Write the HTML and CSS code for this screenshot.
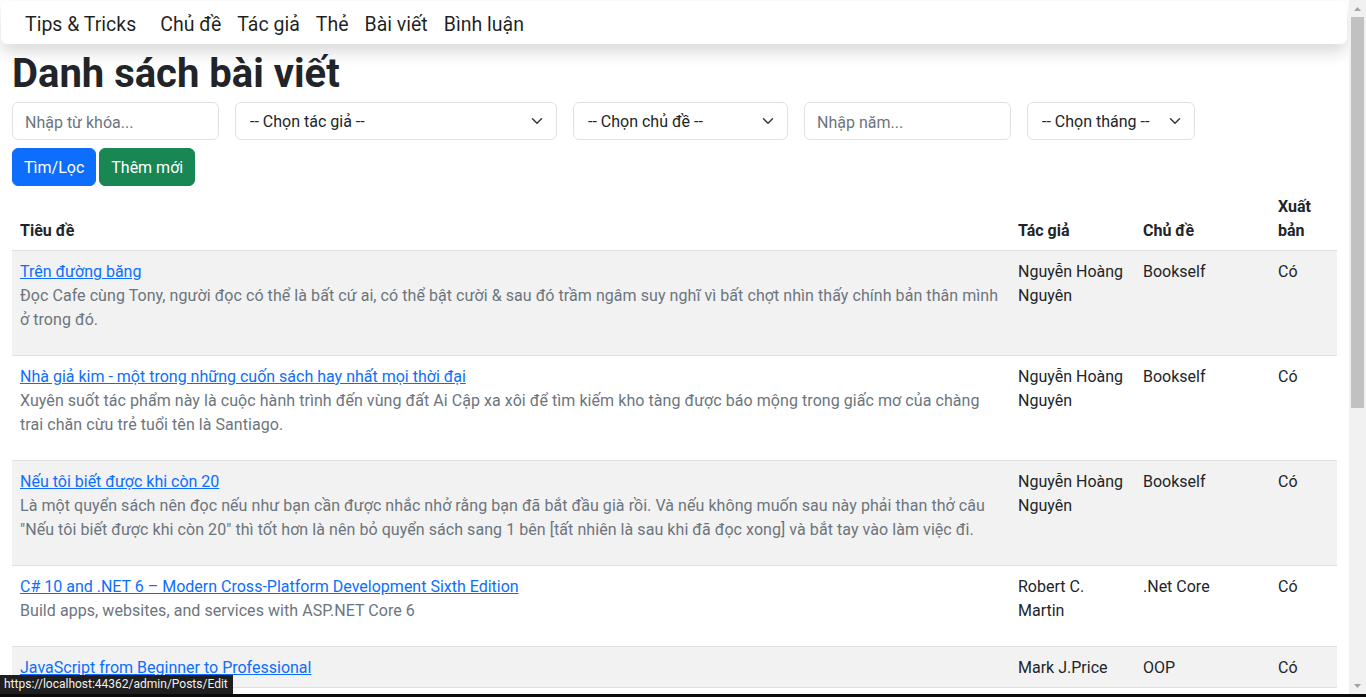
FILE: index.html
```html
<!DOCTYPE html>
<html lang="vi">
<head>
<meta charset="utf-8">
<title>Danh sách bài viết</title>
<link rel="stylesheet" href="styles.css">
</head>
<body>
<div class="window">
  <div class="viewport">
    <div class="page">
      <nav class="navbar">
        <a class="brand" href="#">Tips &amp; Tricks</a>
        <a class="nav-link" href="#">Chủ đề</a>
        <a class="nav-link" href="#">Tác giả</a>
        <a class="nav-link" href="#">Thẻ</a>
        <a class="nav-link" href="#">Bài viết</a>
        <a class="nav-link" href="#">Bình luận</a>
      </nav>
      <main class="content">
        <h1 class="title">Danh sách bài viết</h1>
        <form class="filters">
          <input class="form-control w-keyword" type="text" placeholder="Nhập từ khóa...">
          <span class="select-wrap w-author">
            <select class="form-select"><option>-- Chọn tác giả --</option></select>
            <svg class="chevron" viewBox="0 0 16 16"><path d="m2 5 6 6 6-6"/></svg>
          </span>
          <span class="select-wrap w-topic">
            <select class="form-select"><option>-- Chọn chủ đề --</option></select>
            <svg class="chevron" viewBox="0 0 16 16"><path d="m2 5 6 6 6-6"/></svg>
          </span>
          <input class="form-control w-year" type="text" placeholder="Nhập năm...">
          <span class="select-wrap w-month">
            <select class="form-select"><option>-- Chọn tháng --</option></select>
            <svg class="chevron" viewBox="0 0 16 16"><path d="m2 5 6 6 6-6"/></svg>
          </span>
        </form>
        <div class="actions">
          <button class="btn btn-primary" type="button">Tìm/Lọc</button>
          <button class="btn btn-success" type="button">Thêm mới</button>
        </div>
        <table class="table">
          <colgroup>
            <col class="c-title"><col class="c-author"><col class="c-topic"><col class="c-pub">
          </colgroup>
          <thead>
            <tr><th>Tiêu đề</th><th>Tác giả</th><th>Chủ đề</th><th>Xuất bản</th></tr>
          </thead>
          <tbody>
            <tr class="striped">
              <td><a href="#">Trên đường băng</a><p class="desc">Đọc Cafe cùng Tony, người đọc có thể là bất cứ ai, có thể bật cười &amp; sau đó trầm ngâm suy nghĩ vì bất chợt nhìn thấy chính bản thân mình ở trong đó.</p></td>
              <td>Nguyễn Hoàng Nguyên</td><td>Bookself</td><td>Có</td>
            </tr>
            <tr>
              <td><a href="#">Nhà giả kim - một trong những cuốn sách hay nhất mọi thời đại</a><p class="desc">Xuyên suốt tác phẩm này là cuộc hành trình đến vùng đất Ai Cập xa xôi để tìm kiếm kho tàng được báo mộng trong giấc mơ của chàng trai chăn cừu trẻ tuổi tên là Santiago.</p></td>
              <td>Nguyễn Hoàng Nguyên</td><td>Bookself</td><td>Có</td>
            </tr>
            <tr class="striped">
              <td><a href="#">Nếu tôi biết được khi còn 20</a><p class="desc">Là một quyển sách nên đọc nếu như bạn cần được nhắc nhở rằng bạn đã bắt đầu già rồi. Và nếu không muốn sau này phải than thở câu "Nếu tôi biết được khi còn 20" thì tốt hơn là nên bỏ quyển sách sang 1 bên [tất nhiên là sau khi đã đọc xong] và bắt tay vào làm việc đi.</p></td>
              <td>Nguyễn Hoàng Nguyên</td><td>Bookself</td><td>Có</td>
            </tr>
            <tr>
              <td><a href="#">C# 10 and .NET 6 – Modern Cross-Platform Development Sixth Edition</a><p class="desc">Build apps, websites, and services with ASP.NET Core 6</p></td>
              <td>Robert C. Martin</td><td>.Net Core</td><td>Có</td>
            </tr>
            <tr class="striped">
              <td><a href="#">JavaScript from Beginner to Professional</a></td>
              <td>Mark J.Price</td><td>OOP</td><td>Có</td>
            </tr>
          </tbody>
        </table>
      </main>
    </div>
    <div class="scrollbar">
      <div class="sb-btn"><svg viewBox="0 0 7 4"><path d="M0 4 3.5 0 7 4z"/></svg></div>
      <div class="sb-track"><div class="sb-thumb"></div></div>
      <div class="sb-btn"><svg viewBox="0 0 7 4"><path d="M0 0 7 0 3.5 4z"/></svg></div>
    </div>
    <div class="status">https://localhost:44362/admin/Posts/Edit</div>
  </div>
  <div class="frame-bottom"></div>
</div>
</body>
</html>
```
FILE: styles.css
```css
* { box-sizing: border-box; }

html, body {
  margin: 0;
  padding: 0;
}

body {
  font-family: Roboto, "Liberation Sans", sans-serif;
  font-size: 16px;
  line-height: 1.5;
  color: #212529;
  background: #fff;
}

.window {
  height: 697px;
  display: flex;
  flex-direction: column;
  overflow: hidden;
}

.viewport {
  flex: 1;
  display: flex;
  position: relative;
  overflow: hidden;
}

.page {
  flex: 1;
  min-width: 0;
  overflow: hidden;
}

.frame-bottom {
  height: 3px;
  background: #0b0b0b;
}

/* Navbar */
.navbar {
  height: 43px;
  margin: 1px 2px 0 1px;
  padding: 4px 16px 0 24px;
  display: flex;
  align-items: center;
  background: #fff;
  border-radius: 6px;
  box-shadow: 0 .5rem 1rem rgba(0, 0, 0, .15);
  position: relative;
  z-index: 1;
}

.navbar a {
  color: rgba(0, 0, 0, .88);
  text-decoration: none;
  font-size: 19.5px;
  line-height: 30px;
}

.brand {
  margin-right: 16px;
}

.nav-link {
  padding: 0 8px;
}

/* Content */
.content {
  padding: 0 12px;
}

.title {
  margin: 5px 0 5px;
  padding-top: 1px;
  height: 48px;
  font-size: 40px;
  line-height: 48px;
  font-weight: 700;
  color: #212529;
}

.filters {
  display: flex;
  gap: 16px;
  margin: 0;
}

.form-control,
.form-select {
  display: block;
  width: 100%;
  height: 38px;
  padding: 7px 12px 5px;
  font-family: inherit;
  font-size: 16px;
  line-height: 1.5;
  color: #212529;
  background: #fff;
  border: 1px solid #dee2e6;
  border-radius: 6px;
  outline: none;
}

.form-control::placeholder {
  color: #6c757d;
  opacity: 1;
}

.form-select {
  appearance: none;
  -webkit-appearance: none;
  padding-left: 14px;
  padding-right: 36px;
}

.select-wrap {
  position: relative;
  display: block;
}

.chevron {
  position: absolute;
  right: 12px;
  top: 13px;
  width: 16px;
  height: 12px;
  fill: none;
  stroke: #343a40;
  stroke-width: 2;
  stroke-linecap: round;
  stroke-linejoin: round;
  pointer-events: none;
}

.w-keyword { width: 207px; }
.w-author { width: 322px; }
.w-topic { width: 215px; }
.w-year { width: 207px; }
.w-month { width: 168px; }

.actions {
  display: flex;
  gap: 3px;
  margin-top: 8px;
}

.btn {
  height: 38px;
  padding: 7px 11px 5px;
  font-family: inherit;
  font-size: 16px;
  line-height: 1.5;
  color: #fff;
  border: 1px solid transparent;
  border-radius: 6px;
}

.btn-primary {
  background: #0d6efd;
  border-color: #0d6efd;
}

.btn-success {
  background: #198754;
  border-color: #198754;
}

/* Table */
.table {
  width: 100%;
  table-layout: fixed;
  border-collapse: collapse;
  margin: 0 0 16px;
}

.c-title { width: 998px; }
.c-author { width: 125px; }
.c-topic { width: 135px; }
.c-pub { width: 67px; }

.table th,
.table td {
  padding: 9px 8px 7px;
  text-align: left;
  border-bottom: 1px solid #dee2e6;
}

.table th {
  vertical-align: bottom;
  font-weight: 700;
}

.table td {
  vertical-align: top;
}

.table tr.striped td {
  background: #f2f2f2;
}

.table a {
  color: #0d6efd;
  text-decoration: underline;
}

.desc {
  margin: 0 0 16px;
  color: #6c757d;
  letter-spacing: .06px;
}

/* Fake window scrollbar */
.scrollbar {
  width: 17px;
  flex: none;
  display: flex;
  flex-direction: column;
  background: #f1f1f1;
}

.sb-btn {
  height: 17px;
  display: flex;
  align-items: center;
  justify-content: center;
}

.sb-btn svg {
  width: 7px;
  height: 4px;
  fill: #a3a3a3;
}

.sb-track {
  flex: 1;
}

.sb-thumb {
  height: 391px;
  margin: 0 2px;
  background: #c1c1c1;
}

/* Link status bubble */
.status {
  position: absolute;
  left: 0;
  bottom: 0;
  height: 19px;
  padding: 0 5px 0 4px;
  font-size: 12px;
  line-height: 19px;
  color: #f1f1f1;
  background: #1f1f1f;
  z-index: 2;
}
```
